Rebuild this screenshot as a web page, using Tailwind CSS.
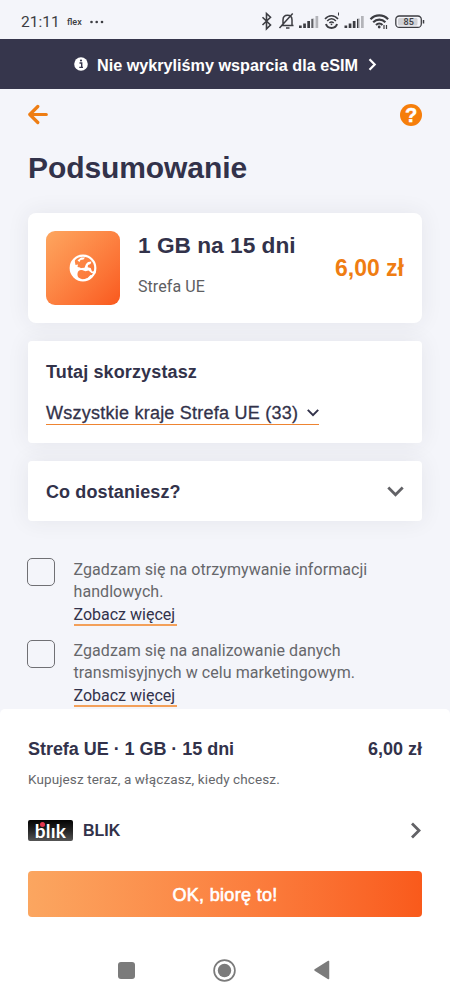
<!DOCTYPE html>
<html lang="pl">
<head>
<meta charset="utf-8">
<title>Podsumowanie</title>
<script src="https://cdn.jsdelivr.net/npm/@tailwindcss/browser@4"></script>
</head>
<body class="w-[450px] h-[999px] overflow-hidden flex flex-col bg-[#f4f5fa] text-[#32324a] font-['Liberation_Sans',Arial,sans-serif]">

<!-- Status bar -->
<div class="h-[39px] shrink-0 flex items-center pt-1 pl-[21px] font-[Roboto,sans-serif] text-[#3c3d42]">
  <span class="text-[15.500px] leading-5 w-[46px] whitespace-nowrap">21:11</span>
  <span class="text-[9px] font-medium leading-5 w-[22px]">flex</span>
  <svg width="16" height="4" viewBox="0 0 16 4" fill="currentColor"><circle cx="2.500" cy="2" r="1.300"/><circle cx="7.700" cy="2" r="1.300"/><circle cx="13" cy="2" r="1.300"/></svg>
  <svg class="ml-auto mr-[23px] shrink-0" width="166" height="22" viewBox="0 0 166 22" fill="none" stroke="currentColor" stroke-width="1.600">
    <!-- bluetooth -->
    <path d="M1.500 6.200 9.500 14l-4 3.800V2.500l4 3.700L1.500 14"/>
    <!-- muted bell -->
    <path d="M20 14.500h12.500M22 14.500V9c0-3 2-4.800 4.500-4.800S31 6 31 9v5.500M31.700 2.500 18.500 17M25 17h3.500" stroke-width="1.500"/>
    <!-- signal 1 -->
    <g stroke="none" fill="currentColor"><rect x="38" y="14.500" width="2.700" height="2.500"/><rect x="42.200" y="12.500" width="2.700" height="4.500"/><rect x="46.300" y="10" width="2.700" height="7"/><g opacity=".35"><rect x="50.500" y="7.500" width="2.700" height="9.500"/><rect x="54.500" y="5" width="2.700" height="12"/></g><rect x="50.500" y="8" width="1.200" height="9"/></g>
    <!-- wifi calling -->
    <path d="M64 8c3.600-4.500 9.400-4.500 13 0M66.200 10c2.500-3 6.200-3 8.700 0M68.400 12c1.300-1.500 3-1.500 4.300 0" stroke-width="1.500"/>
    <path d="M65 13c1.500 5.200 9.600 5.200 11 0" stroke-width="2"/><circle cx="70.500" cy="13.300" r=".9" fill="currentColor" stroke="none"/><path d="M77.500 1.500v3" stroke-width="1"/>
    <!-- signal 2 -->
    <g stroke="none" fill="currentColor"><rect x="83.500" y="14.500" width="2.700" height="2.500"/><rect x="87.700" y="12.500" width="2.700" height="4.500"/><rect x="91.800" y="10" width="2.700" height="7"/><g opacity=".35"><rect x="96" y="7.500" width="2.700" height="9.500"/><rect x="100" y="5" width="2.700" height="12"/></g><rect x="96" y="8" width="1.200" height="9"/></g>
    <!-- wifi -->
    <path d="M109.500 8.200c5-5 12.600-5 17.600 0M112.200 11.200c3.500-3.500 8.700-3.500 12.200 0M115 14c2-2 4.500-2 6.500 0" stroke-width="2.200"/><circle cx="118.200" cy="16" r="1.400" fill="currentColor" stroke="none"/><path d="M123 14v4M125.500 14v4" stroke-width="1.200"/>
    <!-- battery -->
    <rect x="134.800" y="5" width="25.500" height="11.400" rx="3.500" stroke-width="1.300"/><rect x="137" y="7" width="19.500" height="7.500" rx="1.500" fill="#d0d1d6" stroke="none"/><path d="M162.500 9v3.500" stroke-width="1.500"/>
    <text x="147.700" y="14" text-anchor="middle" font-size="9" font-weight="500" fill="currentColor" stroke="none">85</text>
  </svg>
</div>

<!-- Banner -->
<div class="h-[50px] shrink-0 flex items-center pl-[74px] bg-[#36364c] text-white">
  <svg width="14" height="14" viewBox="0 0 14 14"><circle cx="7" cy="7" r="6.800" fill="#fff"/><path d="M5.500 6h2.200v4.300M5.300 10.400h3.700" stroke="#36364c" stroke-width="1.400" fill="none"/><circle cx="7" cy="3.500" r="1.100" fill="#36364c"/></svg>
  <span class="ml-[9px] pt-px w-[262px] whitespace-nowrap font-bold text-[16.200px] leading-5">Nie wykryliśmy wsparcia dla eSIM</span>
  <svg class="ml-[9px]" width="9" height="13" viewBox="0 0 9 13" fill="none" stroke="#fff" stroke-width="2.200"><path d="m1.500 1.200 5.200 5.300-5.200 5.300"/></svg>
</div>

<!-- Page content -->
<main class="h-[620px] shrink-0 overflow-hidden px-[28px] flex flex-col">
  <div class="mt-[14px] h-[23px] flex items-center justify-between">
    <svg width="21" height="21" viewBox="0 0 21 21" fill="none" stroke="#ee7d13" stroke-width="3.200" stroke-linecap="round" stroke-linejoin="round"><path d="M18.300 10.500H2M9.800 2.500l-8 8 8 8"/></svg>
    <div class="size-[22px] rounded-full bg-[#f67e0a] text-white flex items-center justify-center font-bold text-[20px] leading-[22px] [-webkit-text-stroke:0.500px_white]">?</div>
  </div>
  <h1 class="mt-[24px] font-bold text-[30px] leading-9 tracking-[-0.080px] whitespace-nowrap">Podsumowanie</h1>

  <div class="mt-[27px] flex flex-col gap-[18px]">
    <section class="h-[110px] rounded-[8px] bg-white shadow-[0_0_22px_rgba(50,50,60,0.08)] flex px-[18px] pt-[18px]">
      <div class="size-[74px] shrink-0 rounded-[9px] bg-linear-to-br from-[#fda65f] to-[#f9581c] flex items-center justify-center">
        <svg width="28" height="28" viewBox="0 0 28 28"><circle cx="14" cy="14" r="12.300" fill="none" stroke="#fff" stroke-width="2.200"/><path fill="#fff" d="M5.500 4.500C1 10 .5 18 5 23.500l5 3 3-1.500c-3.500-.5-4.800-2.500-4.500-5.500.3-2.500 2-3.500 4.500-4.200l-2-1.800-2.500-.5.500-2.500-2.500.5-.5-2.500z"/><path fill="#fff" d="M8.500 6.500 12 3.500h4l-1.500 2-3 .5-1 2zM17 10l2-2 3.500-.5-1 2.500-2.500 1-.3 2.300 3 .7 1.300 3.500 4-.5-.5 2.500-4-.5-3-2.500-3 .8-3.500-1.300-4 .3 3.500-2.300 3-.2zM13 26l5.500-2 3-3 3 .5-4 4z"/></svg>
      </div>
      <div class="ml-[18px] flex flex-col">
        <h2 class="font-bold text-[22.700px] leading-7 whitespace-nowrap">1 GB na 15 dni</h2>
        <span class="mt-[16px] font-[Roboto,sans-serif] text-[16px] leading-6 tracking-[0.070px] text-[#5e5e62]">Strefa UE</span>
      </div>
      <div class="ml-auto mt-[23px] font-bold text-[23px] leading-7 text-[#ef7d12] whitespace-nowrap">6,00 zł</div>
    </section>

    <section class="h-[102px] rounded-[4px] bg-white shadow-[0_0_22px_rgba(50,50,60,0.08)] px-[18px] pt-[19px]">
      <h3 class="font-bold text-[18px] leading-6 tracking-[0.130px]">Tutaj skorzystasz</h3>
      <div class="mt-[17px] w-[273px] h-[24px] flex items-center whitespace-nowrap border-b border-[#ee8431]">
        <span class="pt-px w-[252px] text-[18px] leading-6 tracking-[0.240px] [-webkit-text-stroke:0.300px_currentColor]">Wszystkie kraje Strefa UE (33)</span>
        <svg class="ml-[9px]" width="12" height="8" viewBox="0 0 12 8" fill="none" stroke="currentColor" stroke-width="2"><path d="m.8.9 5.200 5.200L11.200.9"/></svg>
      </div>
    </section>

    <section class="h-[60px] rounded-[4px] bg-white shadow-[0_0_22px_rgba(50,50,60,0.08)] px-[18px] flex items-center justify-between">
      <h3 class="pt-[2px] font-bold text-[18px] leading-6 tracking-[0.120px]">Co dostaniesz?</h3>
      <svg width="17" height="11" viewBox="0 0 17 11" fill="none" stroke="#626266" stroke-width="2.800"><path d="m1.300 1.500 7.200 7.200 7.200-7.200"/></svg>
    </section>
  </div>

  <div class="mt-[37px] flex flex-col gap-[14px] font-[Roboto,sans-serif] text-[16px] leading-[22px] tracking-[0.065px] text-[#66676b]">
    <div class="-ml-px flex gap-[18.500px] whitespace-nowrap">
      <span class="size-[28px] shrink-0 rounded-[5px] border border-[#707074]"></span>
      <div class="pt-px">
        <p>Zgadzam się na otrzymywanie informacji<br>handlowych.</p>
        <a class="block w-[103px] h-[23px] pt-px border-b-2 border-[#f3a05a] tracking-normal text-[#32324a]">Zobacz więcej</a>
      </div>
    </div>
    <div class="-ml-px flex gap-[18.500px] whitespace-nowrap">
      <span class="size-[28px] shrink-0 rounded-[5px] border border-[#707074]"></span>
      <div>
        <p>Zgadzam się na analizowanie danych<br>transmisyjnych w celu marketingowym.</p>
        <a class="block w-[103px] h-[23px] pt-px border-b-2 border-[#f3a05a] tracking-normal text-[#32324a]">Zobacz więcej</a>
      </div>
    </div>
  </div>
</main>

<!-- Checkout panel -->
<footer class="h-[290px] shrink-0 bg-white rounded-t-[5px] px-[28px] pt-[28px] flex flex-col">
  <div class="flex justify-between font-bold text-[18px] leading-6 whitespace-nowrap"><span class="tracking-[-0.040px]">Strefa UE · 1 GB · 15 dni</span><span>6,00 zł</span></div>
  <p class="mt-[8px] font-[Roboto,sans-serif] text-[13.500px] leading-5 tracking-[0.110px] text-[#66676b]">Kupujesz teraz, a włączasz, kiedy chcesz.</p>
  <div class="mt-[31px] h-[21px] flex items-center">
    <div class="relative w-[45px] h-[21px] rounded-[2px] bg-linear-to-b from-[#050505] via-[#252525] to-[#555] flex items-center justify-center text-white">
      <span class="font-[Lato,sans-serif] font-bold text-[19px] leading-[20px] tracking-[0.200px]">blık</span>
      <span class="absolute left-[12px] top-[2px] size-[5px] rounded-full bg-[#e53950]"></span>
    </div>
    <span class="ml-[10px] font-bold text-[16px] leading-5">BLIK</span>
    <svg class="ml-auto" width="12" height="17" viewBox="0 0 12 17" fill="none" stroke="#626266" stroke-width="2.800"><path d="m2 1.500 7 7-7 7"/></svg>
  </div>
  <button class="mt-[30px] pt-[2px] h-[46px] shrink-0 rounded-[4px] bg-linear-to-r from-[#fba660] to-[#f95a1b] text-white text-[18px] leading-6 tracking-[0.320px] [-webkit-text-stroke:0.600px_white]">OK, biorę to!</button>
  <nav class="mt-[41px] h-[24px] flex items-center text-[#7b7b7b]">
    <span class="ml-[90px] size-[17px] rounded-[3px] bg-[#7b7b7b]"></span>
    <svg class="ml-[78px]" width="23" height="23" viewBox="0 0 23 23"><circle cx="11.500" cy="11.500" r="10.400" fill="none" stroke="currentColor" stroke-width="1.700"/><circle cx="11.500" cy="11.500" r="6.700" fill="currentColor"/></svg>
    <svg class="ml-[77px]" width="17" height="20" viewBox="0 0 17 20"><path d="M15.500 1.500v17L2 10z" fill="currentColor" stroke="currentColor" stroke-width="1.500" stroke-linejoin="round"/></svg>
  </nav>
</footer>
</body>
</html>
